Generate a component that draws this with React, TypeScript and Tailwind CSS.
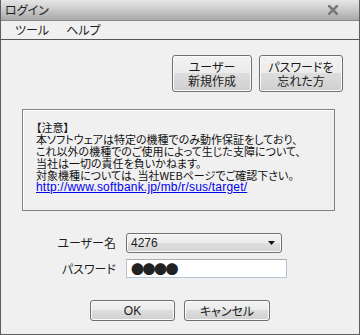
const jp = "font-['Noto_Sans_CJK_JP','Noto_Sans_CJK_SC',sans-serif]";
const btn =
  'flex flex-col items-center justify-center rounded-[3px] border border-[#707070] bg-[linear-gradient(to_bottom,#f2f2f2_0%,#ebebeb_50%,#dddddd_50%,#cfcfcf_100%)] shadow-[inset_0_0_0_1px_#fbfbfb] text-[12px] leading-[14px] text-[#1a1a1a]';

export default function App() {
  return (
    <div className={`w-[360px] h-[335px] flex flex-col bg-[#f0f0f0] border-x border-b border-[#5e5e5e] overflow-hidden ${jp} [font-feature-settings:'palt']`}>
      {/* title bar */}
      <div className="h-[21px] shrink-0 flex items-center justify-between pl-[4px] pr-[21px] bg-gradient-to-b from-[#e6e6e6] via-[#c9c9c9] to-[#a9a9a9] border-b border-[#8a8a8a]">
        <span className="text-[12px] leading-none text-[#1e1e1e]">ログイン</span>
        <svg width="10" height="10" viewBox="0 0 10 10">
          <path d="M1 1 L9 9 M9 1 L1 9" stroke="#7a7a7a" strokeWidth="2.6" strokeLinecap="square" />
        </svg>
      </div>

      {/* menu bar */}
      <div className="h-[19px] shrink-0 flex items-center gap-[17px] pl-[14px] border-b border-[#555] text-[12px] leading-none text-[#1e1e1e]">
        <span>ツール</span>
        <span>ヘルプ</span>
      </div>

      {/* top buttons */}
      <div className="mt-[15px] flex justify-end gap-[7px] pr-[16px]">
        <button className={`${btn} w-[80px] h-[37px]`}>
          <span>ユーザー</span>
          <span>新規作成</span>
        </button>
        <button className={`${btn} w-[84px] h-[37px]`}>
          <span>パスワードを</span>
          <span>忘れた方</span>
        </button>
      </div>

      {/* notice */}
      <div className="mt-[17px] ml-[21px] w-[313px] h-[102px] border border-[#828282] shadow-[inset_1px_1px_0_#ffffff] pl-[13px] pt-[11px] text-[11px] leading-[12px] text-[#111]">
        <p>【注意】</p>
        <p>本ソフトウェアは特定の機種でのみ動作保証をしており、</p>
        <p>これ以外の機種でのご使用によって生じた支障について、</p>
        <p>当社は一切の責任を負いかねます。</p>
        <p>対象機種については、当社WEBページでご確認下さい。</p>
        <a
          href="#"
          className="block font-['Liberation_Sans',sans-serif] text-[12px] leading-[12px] tracking-[0.2px] text-[#0000ee] underline underline-offset-[1px]"
        >
          http://www.softbank.jp/mb/r/sus/target/
        </a>
      </div>

      {/* form */}
      <div className="mt-[22px] flex flex-col gap-[6px] text-[12px] text-[#1e1e1e]">
        <div className="flex items-center">
          <span className="w-[115px] text-right leading-none">ユーザー名</span>
          <div className="ml-[10px] w-[156px] h-[20px] flex items-center justify-between pl-[4px] pr-[6px] rounded-[3px] border border-[#707070] bg-[linear-gradient(to_bottom,#f3f3f3_0%,#ececec_50%,#dedede_50%,#d6d6d6_100%)] shadow-[inset_0_0_0_1px_#fafafa]">
            <span className="font-['Liberation_Sans',sans-serif] text-[12px] leading-none">4276</span>
            <svg width="7" height="4" viewBox="0 0 7 4">
              <path d="M0 0 H7 L3.5 4 Z" fill="#111" />
            </svg>
          </div>
        </div>
        <div className="flex items-center">
          <span className="w-[115px] text-right leading-none">パスワード</span>
          <div className="ml-[10px] w-[161px] h-[19px] flex items-center pl-[4px] bg-white border border-[#b5c4d4] border-t-[#abadb3]">
            <span className="text-[13px] leading-none tracking-[-1.5px] text-[#222]">●●●●</span>
          </div>
        </div>
      </div>

      {/* bottom buttons */}
      <div className="mt-[22px] flex justify-center gap-[9px]">
        <button className={`${btn} w-[85px] h-[21px] border-[#3c7fb1] shadow-[inset_0_0_0_1px_#d8effc] font-['Liberation_Sans',sans-serif]`}>
          OK
        </button>
        <button className={`${btn} w-[86px] h-[21px]`}>キャンセル</button>
      </div>
    </div>
  );
}
